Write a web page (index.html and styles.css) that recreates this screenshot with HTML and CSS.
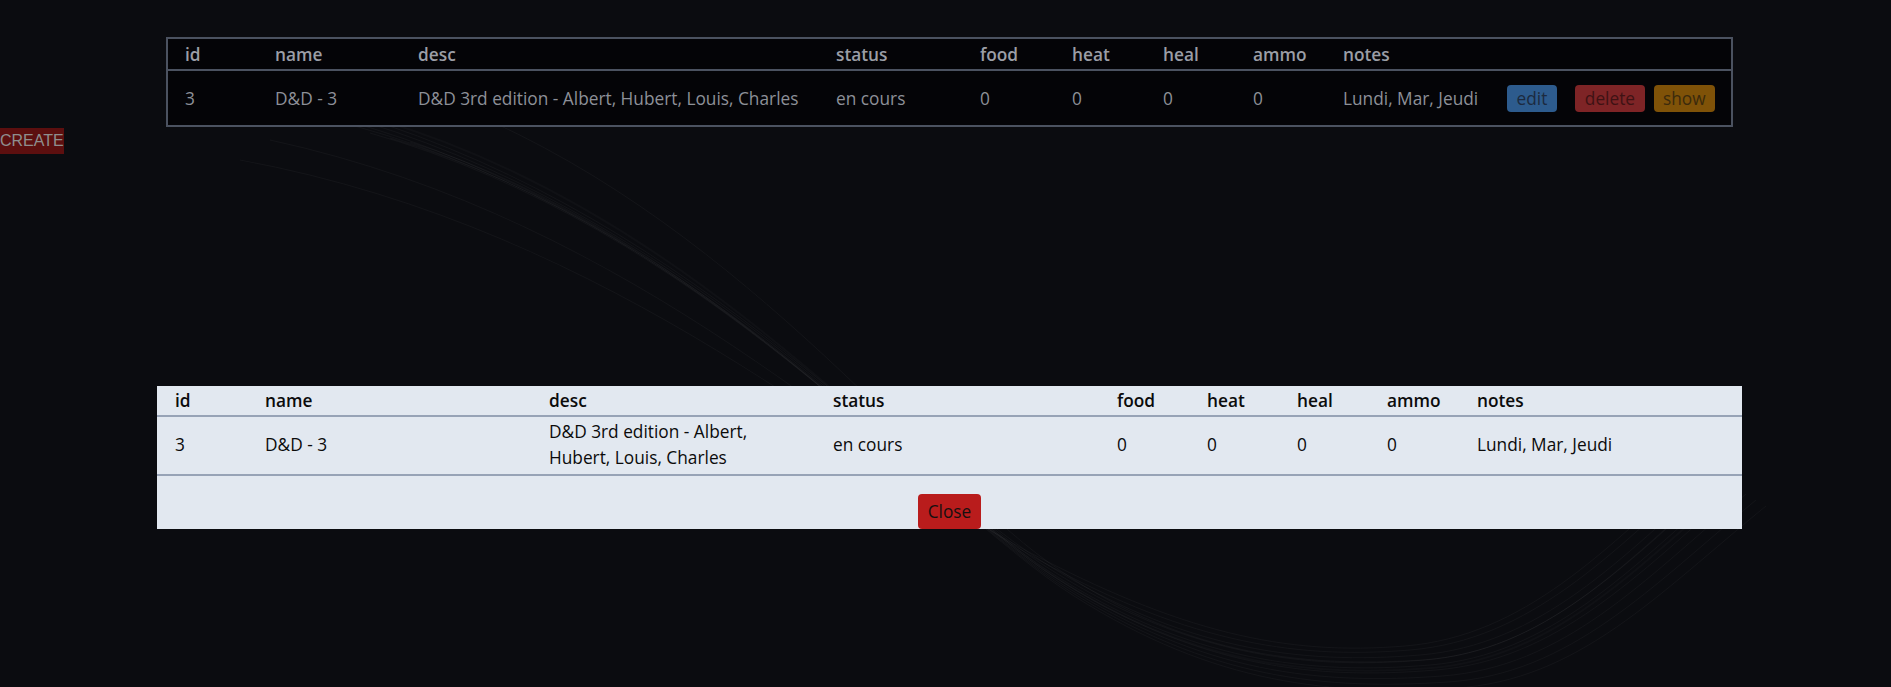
FILE: index.html
```html
<!DOCTYPE html>
<html lang="fr">
<head>
<meta charset="utf-8">
<title>Games</title>
<link rel="stylesheet" href="styles.css">
</head>
<body>
<svg class="bg-lines" width="1891" height="687" viewBox="0 0 1891 687" aria-hidden="true">
  <g fill="none" stroke="#ffffff" stroke-width="1" stroke-opacity="0.035">
    <path d="M320 105 C680 200 900 470 1040 560 S1300 665 1420 655 S1620 560 1720 470"/>
    <path d="M330 112 C685 207 905 476 1045 566 S1305 670 1425 660 S1625 565 1725 476"/>
    <path d="M340 119 C690 214 910 482 1050 572 S1310 675 1430 665 S1630 570 1730 482"/>
    <path d="M355 126 C695 220 915 488 1056 578 S1315 680 1436 670 S1636 576 1738 488"/>
    <path d="M370 133 C700 226 920 494 1062 584 S1320 685 1442 676 S1642 582 1746 494"/>
    <path d="M390 138 C706 232 926 500 1068 590 S1326 690 1448 682 S1650 588 1756 500"/>
    <path d="M410 142 C712 238 932 506 1074 596 S1332 695 1455 688 S1658 594 1766 506"/>
    <path d="M270 140 C640 220 880 470 1030 555 S1290 660 1410 650 S1610 555 1710 465"/>
    <path d="M240 160 C620 230 870 468 1025 550 S1285 656 1405 646 S1605 550 1705 460"/>
    <path d="M440 100 C730 210 920 470 1048 562 S1300 668 1422 660 S1622 566 1722 478"/>
  </g>
  <g fill="none" stroke="#ffffff" stroke-width="2" stroke-opacity="0.025">
    <path d="M380 120 C700 215 915 485 1052 575 S1312 678 1432 668 S1632 572 1734 485"/>
  </g>
</svg>

<main class="page">
  <table class="list">
    <thead>
      <tr>
        <th class="w-id">id</th>
        <th class="w-name">name</th>
        <th class="w-desc">desc</th>
        <th class="w-status">status</th>
        <th class="w-food">food</th>
        <th class="w-heat">heat</th>
        <th class="w-heal">heal</th>
        <th class="w-ammo">ammo</th>
        <th class="w-notes">notes</th>
        <th class="w-actions"></th>
      </tr>
    </thead>
    <tbody>
      <tr>
        <td>3</td>
        <td>D&amp;D - 3</td>
        <td>D&amp;D 3rd edition - Albert, Hubert, Louis, Charles</td>
        <td>en cours</td>
        <td>0</td>
        <td>0</td>
        <td>0</td>
        <td>0</td>
        <td>Lundi, Mar, Jeudi</td>
        <td class="actions">
          <button class="btn btn-edit">edit</button>
          <button class="btn btn-delete">delete</button>
          <button class="btn btn-show">show</button>
        </td>
      </tr>
    </tbody>
  </table>

  <div class="create-row">
    <button class="create">CREATE</button>
  </div>

  <section class="modal">
    <table class="detail">
      <thead>
        <tr>
          <th class="d-small">id</th>
          <th class="d-wide">name</th>
          <th class="d-wide">desc</th>
          <th class="d-wide">status</th>
          <th class="d-small">food</th>
          <th class="d-small">heat</th>
          <th class="d-small">heal</th>
          <th class="d-small">ammo</th>
          <th class="d-notes">notes</th>
        </tr>
      </thead>
      <tbody>
        <tr>
          <td>3</td>
          <td>D&amp;D - 3</td>
          <td>D&amp;D 3rd edition - Albert, Hubert, Louis, Charles</td>
          <td>en cours</td>
          <td>0</td>
          <td>0</td>
          <td>0</td>
          <td>0</td>
          <td>Lundi, Mar, Jeudi</td>
        </tr>
      </tbody>
    </table>
    <div class="modal-footer">
      <button class="close">Close</button>
    </div>
  </section>
</main>
</body>
</html>
```

FILE: styles.css
```css
* {
  box-sizing: border-box;
}

html, body {
  margin: 0;
  padding: 0;
}

body {
  background: #0b0c10;
  font-family: "Open Sans", Lato, sans-serif;
  font-size: 17.3px;
  width: 1891px;
  height: 687px;
  overflow: hidden;
  position: relative;
}

.bg-lines {
  position: absolute;
  left: 0;
  top: 0;
  z-index: 0;
}

.page {
  position: relative;
  z-index: 1;
  padding: 37px 0 0 8px;
}

/* ---------- top list table ---------- */
.list {
  width: 1567px;
  margin: 0 auto;
  table-layout: fixed;
  border-collapse: separate;
  border-spacing: 0;
  border: 2px solid #4b5260;
  background: #040407;
}

.list th {
  text-align: left;
  font-weight: 600;
  color: #9b9ea6;
  line-height: 26px;
  padding: 3px 17px 1px;
  border-bottom: 2px solid #4b5260;
}

.list td {
  color: #8d9098;
  line-height: 26px;
  padding: 14px 17px 13px;
  white-space: nowrap;
  vertical-align: middle;
}

.w-id { width: 90px; }
.w-name { width: 143px; }
.w-desc { width: 418px; }
.w-status { width: 144px; }
.w-food { width: 92px; }
.w-heat { width: 91px; }
.w-heal { width: 90px; }
.w-ammo { width: 90px; }
.w-notes { width: 164px; }
.w-actions { width: 241px; }

.actions {
  display: flex;
  align-items: center;
}

.btn {
  font-family: "Open Sans", Lato, sans-serif;
  font-size: 17.3px;
  height: 27px;
  padding: 0 9.5px;
  border: 0;
  border-radius: 4px;
  line-height: 27px;
}

.btn-edit {
  background: #2d5b8d;
  color: #1c2a3f;
}

.btn-delete {
  background: #7e2426;
  color: #3e1214;
  margin-left: 18px;
  padding: 0 10px;
}

.btn-show {
  background: #7f5208;
  color: #3b2a0c;
  margin-left: 9px;
  padding: 0 9px;
}

/* ---------- create ---------- */
.create-row {
  margin: 1px 0 0 -8px;
  height: 26px;
}

.create {
  font-family: "Liberation Sans", Arial, sans-serif;
  font-size: 16px;
  height: 26px;
  padding: 0;
  border: 0;
  border-radius: 0;
  background: #5c0f0f;
  color: #8e8e8e;
  line-height: 26px;
}

/* ---------- modal ---------- */
.modal {
  width: 1585px;
  margin: 232px auto 0;
  background: #e2e8f0;
  height: 143px;
}

.detail {
  width: 1585px;
  table-layout: fixed;
  border-collapse: separate;
  border-spacing: 0;
}

.detail th {
  text-align: left;
  font-weight: 600;
  color: #0b0b0b;
  line-height: 26px;
  padding: 2px 18px 1px;
  border-bottom: 2px solid #97a3b6;
}

.detail td {
  color: #0b0b0b;
  line-height: 26px;
  padding: 2px 18px 3px;
  border-bottom: 2px solid #97a3b6;
  vertical-align: middle;
}

.d-small { width: 90px; }
.d-wide { width: 284px; }
.d-notes { width: 283px; }

.modal-footer {
  display: flex;
  justify-content: center;
  padding-top: 18px;
}

.close {
  font-family: "Open Sans", Lato, sans-serif;
  font-size: 17.3px;
  height: 35px;
  padding: 0 10px;
  border: 0;
  border-radius: 4px;
  background: #b91c1c;
  color: #151010;
}
```
